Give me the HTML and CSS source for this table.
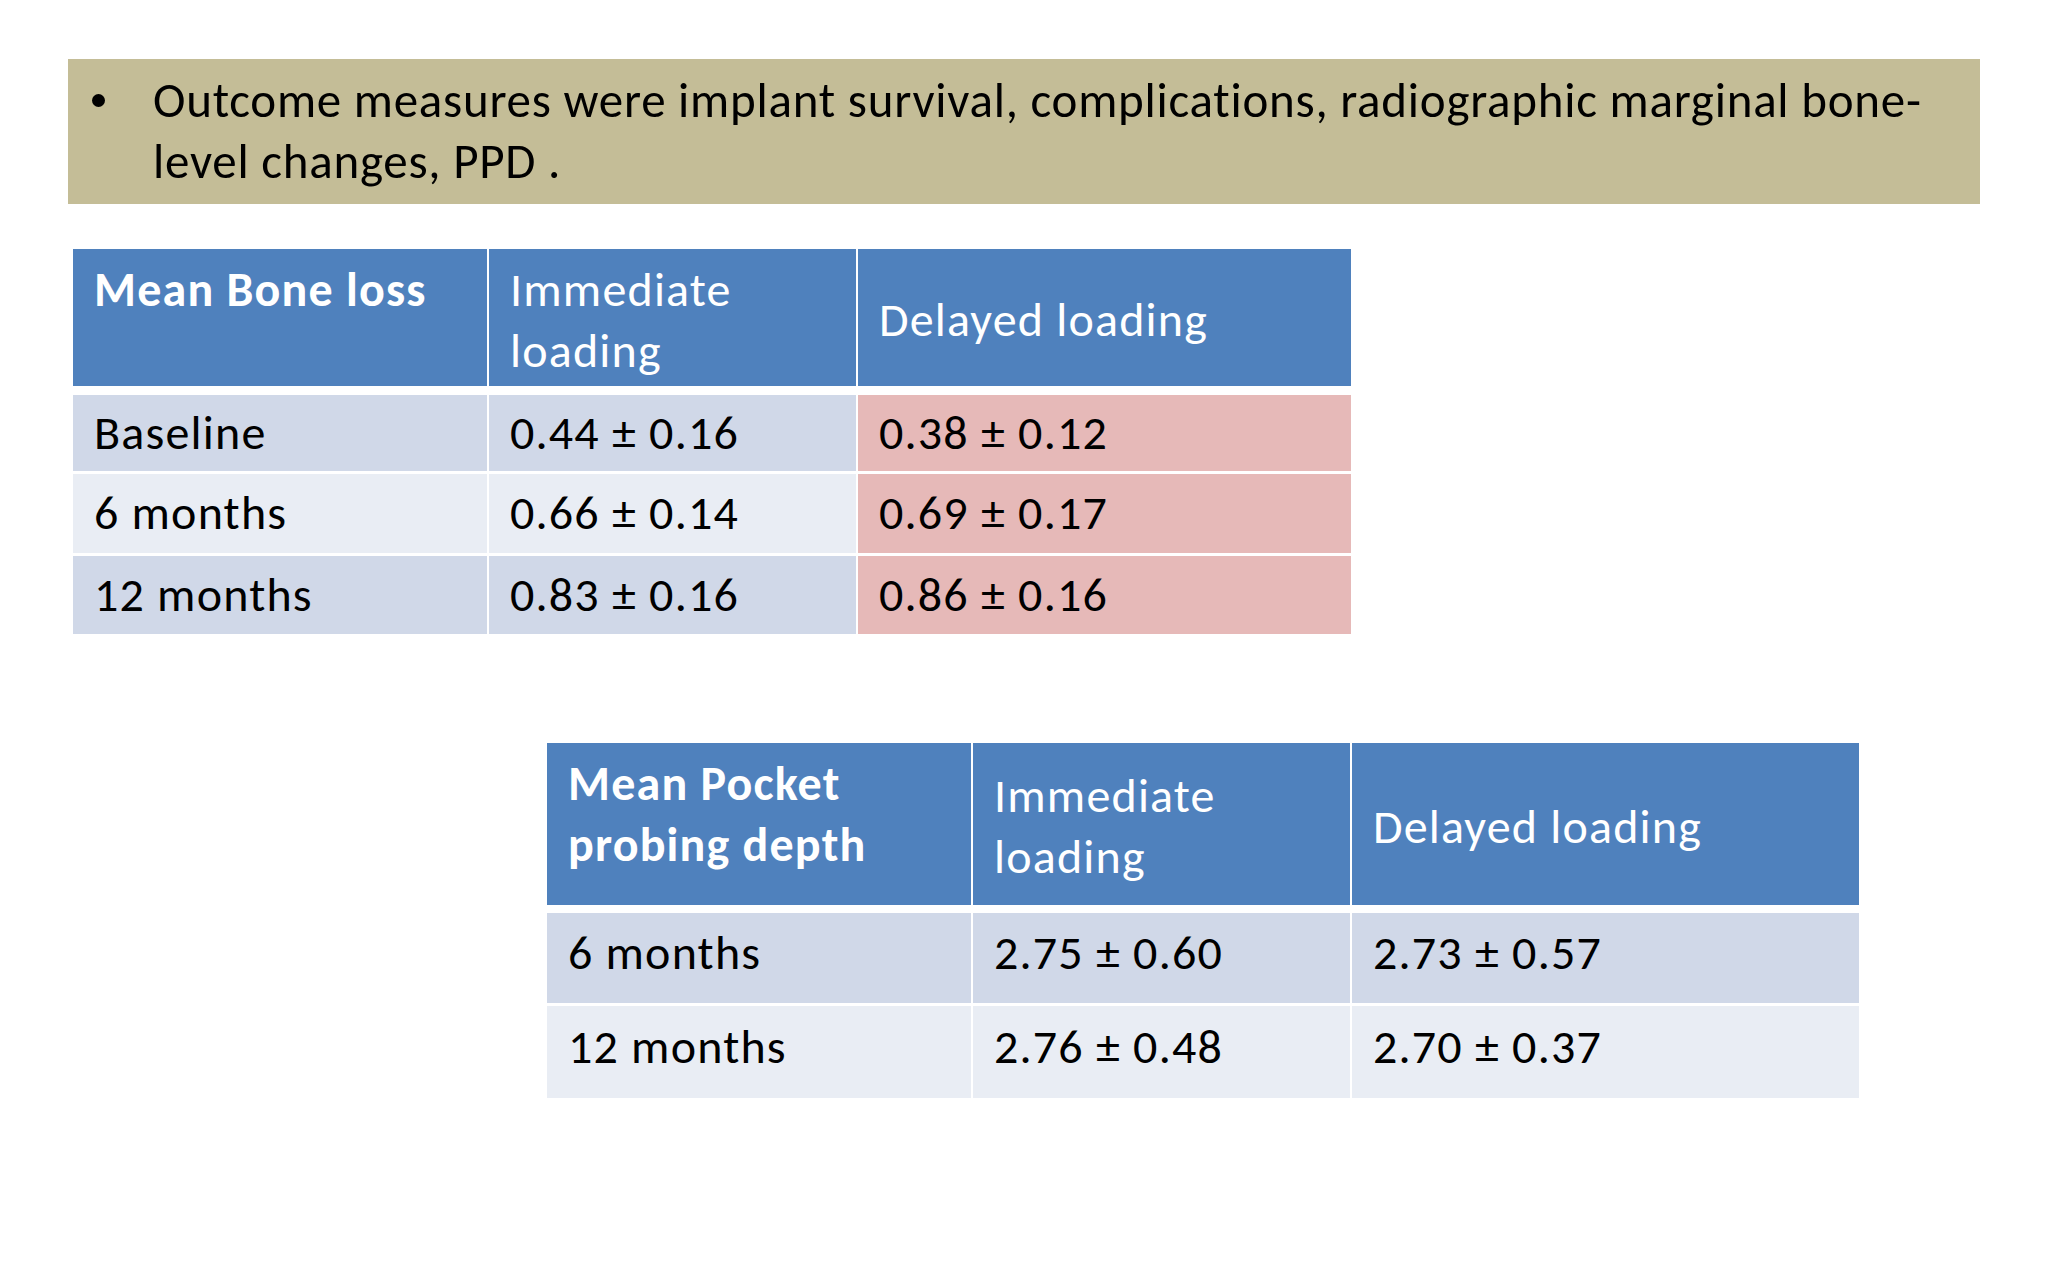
FILE: index.html
```html
<!DOCTYPE html>
<html lang="en">
<head>
<meta charset="utf-8">
<title>Outcome measures</title>
<link rel="stylesheet" href="styles.css">
</head>
<body>
<div class="slide">
  <div class="banner">
    <span class="bullet"></span>
    <p class="banner-text">Outcome measures were implant survival, complications, radiographic marginal bone-level changes, PPD .</p>
  </div>

  <div class="table t1">
    <div class="row head">
      <div class="cell top bold">Mean Bone loss</div>
      <div class="cell">Immediate loading</div>
      <div class="cell">Delayed loading</div>
    </div>
    <div class="row r1 dark">
      <div class="cell">Baseline</div>
      <div class="cell">0.44 ± 0.16</div>
      <div class="cell pink">0.38 ± 0.12</div>
    </div>
    <div class="row r2 light">
      <div class="cell">6 months</div>
      <div class="cell">0.66 ± 0.14</div>
      <div class="cell pink">0.69 ± 0.17</div>
    </div>
    <div class="row r3 dark">
      <div class="cell">12 months</div>
      <div class="cell">0.83 ± 0.16</div>
      <div class="cell pink">0.86 ± 0.16</div>
    </div>
  </div>

  <div class="table t2">
    <div class="row head">
      <div class="cell top bold">Mean Pocket probing depth</div>
      <div class="cell">Immediate loading</div>
      <div class="cell">Delayed loading</div>
    </div>
    <div class="row r1 dark">
      <div class="cell">6 months</div>
      <div class="cell">2.75 ± 0.60</div>
      <div class="cell">2.73 ± 0.57</div>
    </div>
    <div class="row r2 light">
      <div class="cell">12 months</div>
      <div class="cell">2.76 ± 0.48</div>
      <div class="cell">2.70 ± 0.37</div>
    </div>
  </div>
</div>
</body>
</html>
```

FILE: styles.css
```css
html, body {
  margin: 0;
  padding: 0;
  background: #ffffff;
}

.slide {
  width: 2048px;
  height: 1280px;
  padding-top: 59px;
  box-sizing: border-box;
  font-family: "Carlito", "Lato", "Liberation Sans", sans-serif;
  color: #000000;
}

.banner {
  margin-left: 68px;
  width: 1912px;
  height: 145px;
  background: #c4bd97;
  display: flex;
  align-items: flex-start;
  box-sizing: border-box;
  padding-left: 24px;
  padding-top: 11px;
}

.bullet {
  flex: none;
  width: 13px;
  height: 13px;
  border-radius: 50%;
  background: #000000;
  margin-top: 24px;
  margin-right: 48px;
}

.banner-text {
  margin: 0;
  font-size: 49px;
  letter-spacing: 0.75px;
  line-height: 61px;
  width: 1812px;
}

.table {
  display: flex;
  flex-direction: column;
}

.row {
  display: grid;
  column-gap: 2px;
}

.t1 {
  margin-top: 45px;
  margin-left: 73px;
}

.t1 .row {
  grid-template-columns: 414px 367px 493px;
}

.t1 .head { height: 137px; }
.t1 .r1 { height: 76px; margin-top: 9px; }
.t1 .r2 { height: 79px; margin-top: 3px; }
.t1 .r3 { height: 78px; margin-top: 3px; }

.t1 .dark .cell,
.t1 .light .cell {
  padding-bottom: 2px;
}

.t2 {
  margin-top: 109px;
  margin-left: 547px;
}

.t2 .row {
  grid-template-columns: 424px 377px 507px;
}

.t2 .head { height: 162px; }
.t2 .r1 { height: 90px; margin-top: 8px; }
.t2 .r2 { height: 92px; margin-top: 3px; }

.t2 .dark .cell,
.t2 .light .cell {
  padding-bottom: 12px;
}

.cell {
  display: flex;
  align-items: center;
  padding-left: 21px;
  padding-right: 12px;
  font-size: 48px;
  letter-spacing: 1.2px;
  line-height: 61px;
  box-sizing: border-box;
}

.head .cell {
  background: #4f81bd;
  color: #ffffff;
  padding-top: 4px;
}

.head .cell.top {
  align-items: flex-start;
  padding-top: 10px;
}

.bold {
  font-weight: bold;
}

.dark .cell { background: #d0d8e8; }
.light .cell { background: #e9edf4; }
.row .cell.pink { background: #e6b9b8; }
```
